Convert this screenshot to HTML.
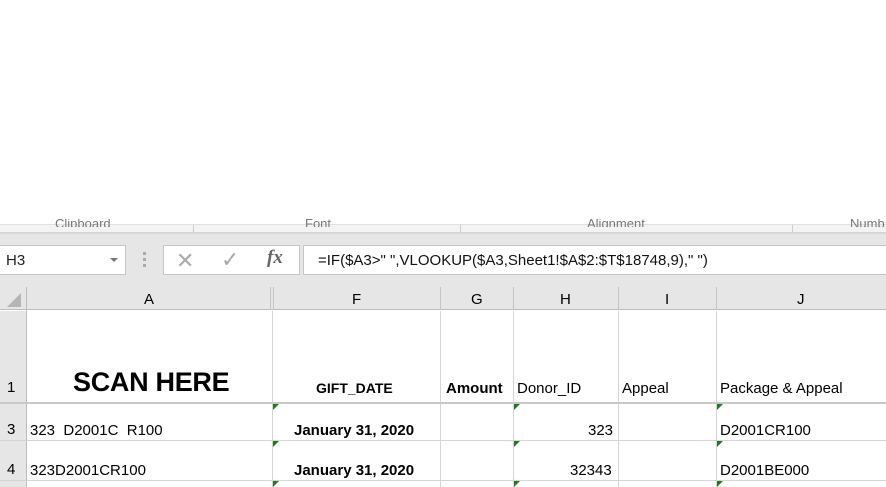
<!DOCTYPE html>
<html><head><style>
*{margin:0;padding:0;box-sizing:border-box}
body{width:886px;height:487px;overflow:hidden;background:#fff;font-family:"Liberation Sans",sans-serif;position:relative}
.a{position:absolute}
.t{position:absolute;white-space:nowrap;color:#000}
.vl{position:absolute;width:1px;background:#d4d4d4}
.hl{position:absolute;height:1px;background:#d4d4d4}
.gr{position:absolute;width:0;height:0;border-top:6px solid #1e7b1e;border-right:6px solid transparent}
</style></head><body>
<div class="a" style="left:0;top:224px;width:886px;height:8px;background:#f3f3f3;border-top:1px solid #e0e0e0"></div>
<div class="t" style="left:55px;top:219px;font-size:13px;color:#777;height:8px;overflow:hidden;line-height:10px">Clipboard</div>
<div class="t" style="left:305px;top:219px;font-size:13px;color:#777;height:8px;overflow:hidden;line-height:10px">Font</div>
<div class="t" style="left:587px;top:219px;font-size:13px;color:#777;height:8px;overflow:hidden;line-height:10px">Alignment</div>
<div class="t" style="left:850px;top:219px;font-size:13px;color:#777;height:8px;overflow:hidden;line-height:10px">Numb</div>
<div class="a" style="left:193px;top:225px;width:1px;height:7px;background:#ccc"></div>
<div class="a" style="left:460px;top:225px;width:1px;height:7px;background:#ccc"></div>
<div class="a" style="left:792px;top:225px;width:1px;height:7px;background:#ccc"></div>
<div class="a" style="left:0;top:232px;width:886px;height:78px;background:#e6e6e6"></div>
<div class="a" style="left:0;top:232px;width:886px;height:3px;background:linear-gradient(#d0d0d0,#e6e6e6)"></div>
<div class="a" style="left:-1px;top:245px;width:127px;height:30px;background:#fff;border:1px solid #c6c6c6"></div>
<div class="t" style="left:6px;top:252px;font-size:15px;color:#222">H3</div>
<div class="a" style="left:110px;top:258px;border-top:4px solid #777;border-left:4px solid transparent;border-right:4px solid transparent"></div>
<div class="a" style="left:143px;top:252px;width:3px;height:3px;background:#aaa;box-shadow:0 6px 0 #aaa,0 12px 0 #aaa"></div>
<div class="a" style="left:163px;top:245px;width:137px;height:30px;background:#fff;border:1px solid #c6c6c6"></div>
<div class="t" style="left:176px;top:248px;font-size:22px;color:#aaa">✕</div>
<div class="t" style="left:221px;top:247px;font-size:22px;color:#aaa">✓</div>
<div class="t" style="left:267px;top:247px;font-size:19px;color:#666;font-family:'Liberation Serif',serif;font-style:italic;font-weight:bold">fx</div>
<div class="a" style="left:303px;top:245px;width:590px;height:30px;background:#fff;border:1px solid #c6c6c6"></div>
<div class="t" style="left:318px;top:252px;font-size:15px;color:#111">=IF($A3&gt;" ",VLOOKUP($A3,Sheet1!$A$2:$T$18748,9)," ")</div>
<div class="a" style="left:0;top:287px;width:886px;height:23px;background:#e6e6e6;border-bottom:1px solid #bcbcbc"></div>
<div class="a" style="left:7px;top:293px;border-bottom:14px solid #b5b5b5;border-left:14px solid transparent"></div>
<div class="a" style="left:26px;top:287px;width:1px;height:200px;background:#bcbcbc"></div>
<div class="a" style="left:270px;top:287px;width:1px;height:23px;background:#c4c4c4"></div>
<div class="a" style="left:273px;top:287px;width:1px;height:23px;background:#c4c4c4"></div>
<div class="a" style="left:440px;top:287px;width:1px;height:23px;background:#c4c4c4"></div>
<div class="a" style="left:513px;top:287px;width:1px;height:23px;background:#c4c4c4"></div>
<div class="a" style="left:618px;top:287px;width:1px;height:23px;background:#c4c4c4"></div>
<div class="a" style="left:716px;top:287px;width:1px;height:23px;background:#c4c4c4"></div>
<div class="t" style="left:144px;top:291px;font-size:15px">A</div>
<div class="t" style="left:352px;top:291px;font-size:15px">F</div>
<div class="t" style="left:471px;top:291px;font-size:15px">G</div>
<div class="t" style="left:560px;top:291px;font-size:15px">H</div>
<div class="t" style="left:665px;top:291px;font-size:15px">I</div>
<div class="t" style="left:797px;top:291px;font-size:15px">J</div>
<div class="a" style="left:0;top:311px;width:26px;height:176px;background:#e6e6e6"></div>
<div class="t" style="left:7px;top:379px;font-size:15px">1</div>
<div class="t" style="left:7px;top:421px;font-size:15px">3</div>
<div class="t" style="left:7px;top:461px;font-size:15px">4</div>
<div class="vl" style="left:272px;top:311px;height:176px"></div>
<div class="vl" style="left:440px;top:311px;height:176px"></div>
<div class="vl" style="left:513px;top:311px;height:176px"></div>
<div class="vl" style="left:618px;top:311px;height:176px"></div>
<div class="vl" style="left:716px;top:311px;height:176px"></div>
<div class="a" style="left:0;top:402px;width:886px;height:2px;background:#c8c8c8"></div>
<div class="hl" style="left:0;top:440px;width:886px"></div>
<div class="hl" style="left:0;top:480px;width:886px"></div>
<div class="t" style="left:73px;top:367px;font-size:27px;font-weight:bold;letter-spacing:-0.3px">SCAN HERE</div>
<div class="t" style="left:316px;top:380px;font-size:14px;font-weight:bold">GIFT_DATE</div>
<div class="t" style="left:446px;top:380px;font-size:15px;font-weight:bold">Amount</div>
<div class="t" style="left:517px;top:380px;font-size:15px">Donor_ID</div>
<div class="t" style="left:622px;top:380px;font-size:15px">Appeal</div>
<div class="t" style="left:720px;top:380px;font-size:15px">Package &amp; Appeal</div>
<div class="gr" style="left:273px;top:404px"></div>
<div class="gr" style="left:514px;top:404px"></div>
<div class="gr" style="left:717px;top:404px"></div>
<div class="t" style="left:30px;top:422px;font-size:15px">323&nbsp; D2001C&nbsp; R100</div>
<div class="t" style="left:294px;top:422px;font-size:15px;font-weight:bold">January 31, 2020</div>
<div class="t" style="left:588px;top:422px;font-size:15px">323</div>
<div class="t" style="left:720px;top:422px;font-size:15px">D2001CR100</div>
<div class="gr" style="left:273px;top:441px"></div>
<div class="gr" style="left:514px;top:441px"></div>
<div class="gr" style="left:717px;top:441px"></div>
<div class="t" style="left:30px;top:462px;font-size:15px">323D2001CR100</div>
<div class="t" style="left:294px;top:462px;font-size:15px;font-weight:bold">January 31, 2020</div>
<div class="t" style="left:570px;top:462px;font-size:15px">32343</div>
<div class="t" style="left:720px;top:462px;font-size:15px">D2001BE000</div>
<div class="gr" style="left:273px;top:481px"></div>
<div class="gr" style="left:514px;top:481px"></div>
<div class="gr" style="left:717px;top:481px"></div>
</body></html>
